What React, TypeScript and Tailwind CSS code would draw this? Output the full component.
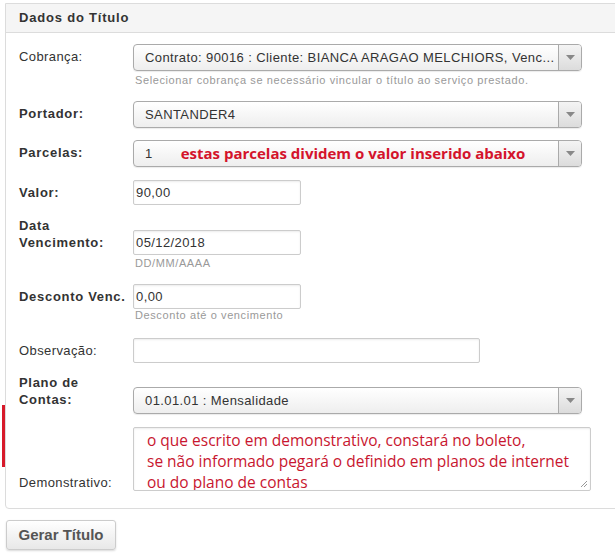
import React from "react";

const font = { fontFamily: '"Liberation Sans", Arial, sans-serif' };

function Arrow() {
  return (
    <div className="flex h-full w-[23px] items-center justify-center border-l border-[#aaa] bg-gradient-to-b from-[#f4f4f4] to-[#dcdcdc]">
      <svg width="9" height="6" viewBox="0 0 9 6">
        <path d="M0 0 L9 0 L4.5 5 Z" fill="#888" />
      </svg>
    </div>
  );
}

function Select({ children, w = "w-[449px]" }: { children: React.ReactNode; w?: string }) {
  return (
    <div className={`flex h-[27px] ${w} items-stretch overflow-hidden rounded-[4px] border border-[#aaa] bg-gradient-to-b from-white to-[#eeeeee] shadow-[0_1px_1px_rgba(0,0,0,0.08)]`}>
      <div className="flex min-w-0 flex-1 items-center overflow-hidden whitespace-nowrap pl-[11px] text-[13px] tracking-[0.4px] text-[#333]">
        {children}
      </div>
      <Arrow />
    </div>
  );
}

function Input({ value, w }: { value?: string; w: string }) {
  return (
    <div className={`flex h-[25px] ${w} items-center rounded-[2px] border border-[#ccc] bg-white pl-[2px] text-[13px] tracking-[0.4px] text-[#333] shadow-[inset_0_1px_2px_rgba(0,0,0,0.08)]`}>
      {value}
    </div>
  );
}

function Label({ children, bold, pb }: { children: React.ReactNode; bold?: boolean; pb: string }) {
  return (
    <div
      className={`w-[114px] shrink-0 text-[13px] leading-[17px] text-[#333] ${
        bold ? "font-bold tracking-[0.7px]" : "tracking-[0.4px]"
      } ${pb}`}
    >
      {children}
    </div>
  );
}

function Help({ children, mt }: { children: React.ReactNode; mt: string }) {
  return <div className={`ml-[116px] text-[11px] leading-[13px] tracking-[0.6px] text-[#999] ${mt}`}>{children}</div>;
}

export default function App() {
  return (
    <div className="relative h-[558px] w-[615px] overflow-hidden bg-white" style={font}>
      <div className="absolute left-[2px] top-[405px] h-[62px] w-[3px] bg-[#d7192a]" />
      <div className="ml-[5px] mt-[3px] w-[640px] rounded-b-[4px] border border-[#dcdcdc]">
        <div className="flex h-[29px] items-center border-b border-[#dcdcdc] bg-[#f5f5f5] pl-[13px] text-[13px] font-bold tracking-[0.8px] text-[#333]">
          Dados do Título
        </div>
        <div className="pb-[17px] pl-[13px]">
          <div className="mt-[11px] flex items-end">
            <Label pb="pb-[6px]">Cobrança:</Label>
            <Select>Contrato: 90016 : Cliente: BIANCA ARAGAO MELCHIORS, Venc...</Select>
          </div>
          <Help mt="mt-[3px]">Selecionar cobrança se necessário vincular o título ao serviço prestado.</Help>
          <div className="mt-[14px] flex items-end">
            <Label bold pb="pb-[6px]">Portador:</Label>
            <Select>SANTANDER4</Select>
          </div>
          <div className="mt-[12px] flex items-end">
            <Label bold pb="pb-[6px]">Parcelas:</Label>
            <Select>
              <span>1</span>
              <span
                className="ml-[28px] text-[15px] font-bold tracking-normal text-[#d4132b]"
                style={{ fontFamily: '"Open Sans", sans-serif' }}
              >
                estas parcelas dividem o valor inserido abaixo
              </span>
            </Select>
          </div>
          <div className="mt-[13px] flex items-end">
            <Label bold pb="pb-[4px]">Valor:</Label>
            <Input value="90,00" w="w-[168px]" />
          </div>
          <div className="mt-[12px] flex items-end">
            <Label bold pb="pb-[4px]">
              Data
              <br />
              Vencimento:
            </Label>
            <Input value="05/12/2018" w="w-[168px]" />
          </div>
          <Help mt="mt-[2px]">DD/MM/AAAA</Help>
          <div className="mt-[14px] flex items-end">
            <Label bold pb="pb-[4px]">Desconto Venc.</Label>
            <Input value="0,00" w="w-[168px]" />
          </div>
          <Help mt="mt-0">Desconto até o vencimento</Help>
          <div className="mt-[16px] flex items-end">
            <Label pb="pb-[4px]">Observação:</Label>
            <Input w="w-[347px]" />
          </div>
          <div className="mt-[11px] flex items-end">
            <Label bold pb="pb-[6px]">
              Plano de
              <br />
              Contas:
            </Label>
            <Select>01.01.01 : Mensalidade</Select>
          </div>
          <div className="mt-[13px] flex items-end">
            <Label pb="pb-0">Demonstrativo:</Label>
            <div
              className="relative h-[64px] w-[458px] overflow-hidden rounded-[2px] border border-[#ccc] bg-white pl-[13px] pt-[2px] text-[15.5px] leading-[21px] text-[#c8162f] shadow-[inset_0_1px_2px_rgba(0,0,0,0.08)]"
              style={{ fontFamily: '"Open Sans", sans-serif' }}
            >
              <div>o que escrito em demonstrativo, constará no boleto,</div>
              <div>se não informado pegará o definido em planos de internet</div>
              <div>ou do plano de contas</div>
              <svg className="absolute bottom-[2px] right-[2px]" width="8" height="8" viewBox="0 0 8 8">
                <path d="M7 1 L1 7 M7 4 L4 7" stroke="#999" strokeWidth="1" />
              </svg>
            </div>
          </div>
        </div>
      </div>
      <div className="ml-[6px] mt-[11px] flex h-[30px] w-[110px] items-center justify-center rounded-[3px] border border-[#ccc] bg-gradient-to-b from-white to-[#e8e8e8] text-[15px] font-bold text-[#555] shadow-[0_1px_2px_rgba(0,0,0,0.15)]">
        Gerar Título
      </div>
    </div>
  );
}
